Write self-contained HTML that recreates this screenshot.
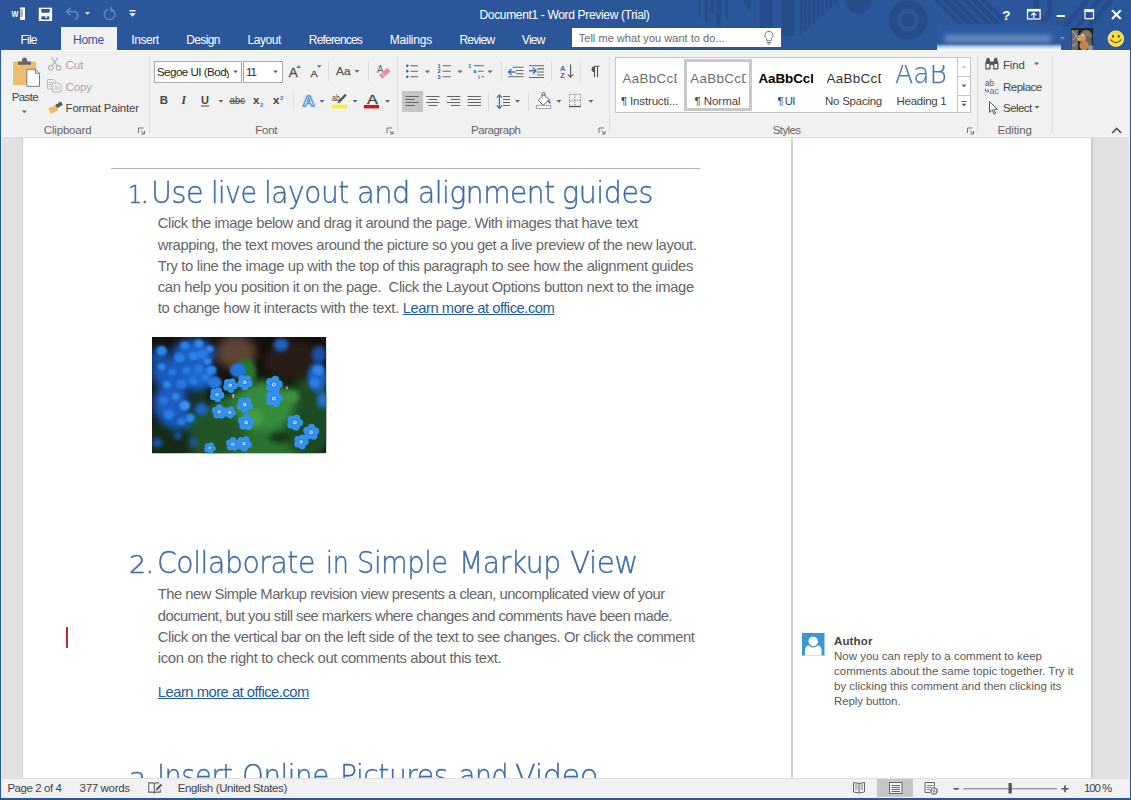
<!DOCTYPE html>
<html lang="en">
<head>
<meta charset="utf-8">
<title>Document1 - Word Preview (Trial)</title>
<style>
html,body{margin:0;padding:0;}
body{width:1131px;height:800px;overflow:hidden;position:relative;background:#ffffff;font-family:"Liberation Sans",sans-serif;}
.a{position:absolute;}
.t{position:absolute;white-space:pre;line-height:1;font-family:"Liberation Sans",sans-serif;}
#titlebar{left:0;top:0;width:1131px;height:50px;background:#2b579a;}
#ribbon{left:0;top:50px;width:1131px;height:88px;background:#f1f1f1;}
#docbg{left:0;top:138px;width:1131px;height:641px;background:#e1e1e1;}
#page{left:23px;top:138px;width:1068px;height:641px;background:#fff;}
#status{left:0;top:779px;width:1131px;height:21px;background:#f1f1f1;z-index:5;}
.sep{position:absolute;width:1px;background:#dcdcdc;}
.z6{z-index:6;}
svg{position:absolute;overflow:visible;}
</style>
</head>
<body>
<div class="a" id="titlebar"></div>
<svg style="left:0;top:0;" width="1131" height="50" viewBox="0 0 1131 50">
<g fill="#254d8b">
<rect x="698" y="0" width="2.600" height="16.800"/><rect x="705" y="0" width="2.700" height="23"/><rect x="711.200" y="0" width="2.700" height="13"/><rect x="716.500" y="0" width="4.500" height="26.500"/><rect x="725.400" y="0" width="2.600" height="19.500"/>
<polygon points="743,0 751.500,0 750,13"/>
<rect x="759.5" y="0" width="13" height="28"/>
<rect x="782" y="0" width="12.5" height="36"/>
<path d="M799.6 0h2.600v35.0h-2.600zM803.9 0h2.600v31.1h-2.600zM808.2 0h2.600v27.2h-2.600zM812.5 0h2.600v23.4h-2.600zM816.8 0h2.600v19.5h-2.600zM821.1 0h2.600v15.6h-2.600zM825.4 0h2.600v11.8h-2.600zM829.7 0h2.600v7.9h-2.600zM834.0 0h2.600v4.0h-2.600z"/>
<path d="M845 0a13.500 13.500 0 0 0 27 0z"/>
<circle cx="908" cy="20" r="6.800"/>
<path d="M908 0.500a19.500 19.500 0 1 0 0.010 0zM908 8.500a11.500 11.500 0 1 1 -0.010 0z" fill-rule="evenodd"/>
<path d="M1034 0h5v12a4 4 0 0 0 8 0v-12h5v13a8.500 8.500 0 0 1 -18 0z"/>
<path d="M1062 27l22 -27h6l-22 27zM1074 27l22 -27h6l-22 27zM1086 27l22 -27h6l-22 27z"/>
</g>
<g stroke="#254d8b" stroke-width="4.200" fill="none" clip-path="url(#tc1)">
<path d="M932 -4l30 30M941.500 -4l30 30M951 -4l30 30M960.500 -4l30 30M970 -4l30 30M979.500 -4l30 30"/>
</g>
<defs><clipPath id="tc1"><polygon points="934,0 986,0 1003,14 1003,24 958,24"/></clipPath></defs>
</svg>
<div class="a" style="left:60.5px;top:27px;width:56.5px;height:23px;background:#f1f1f1;"></div>
<div class="a" style="left:572px;top:28px;width:209px;height:19px;background:#fff;"></div>
<!-- blurred user name -->
<div class="a" style="left:937px;top:26px;width:124px;height:24px;overflow:hidden;">
<div class="a" style="left:0;top:0;width:124px;height:24px;background:#2c5ba1;"></div>
<div class="a" style="left:8px;top:9px;width:106px;height:7px;background:#6a8cc0;filter:blur(2.5px);"></div>
<div class="a" style="left:-6px;top:18.5px;width:136px;height:12px;background:linear-gradient(to bottom,#9db4d6 0,#ffffff 45%);filter:blur(1.2px);"></div>
</div>
<svg style="left:1059.500px;top:36.500px;" width="5" height="3" viewBox="0 0 5 3"><path d="M0 0h5l-2.500 2.800z" fill="#7692c2"/></svg>
<!-- avatar -->
<svg style="left:1071px;top:27.500px;" width="22" height="22.500" viewBox="0 0 22 22.500">
<defs><filter id="av" x="-20%" y="-20%" width="140%" height="140%"><feGaussianBlur stdDeviation="0.700"/></filter><clipPath id="avc"><rect width="22" height="22.500"/></clipPath></defs>
<g clip-path="url(#avc)">
<rect width="22" height="22.500" fill="#1c2434"/>
<g filter="url(#av)">
<rect x="0.500" y="2" width="6.500" height="21" fill="#6f6e68"/>
<path d="M1 3l5 6M2 12l4 -5M1 18l5 -3" stroke="#b8b8b0" stroke-width="0.800"/>
<ellipse cx="15" cy="8" rx="6" ry="6" fill="#8a735e"/>
<ellipse cx="17.500" cy="15" rx="3.500" ry="7" fill="#6d6258"/>
<ellipse cx="10.500" cy="10" rx="4.200" ry="3.500" fill="#d39562"/>
<ellipse cx="13" cy="17.500" rx="4.500" ry="5" fill="#c98048"/>
<ellipse cx="8" cy="11.500" rx="2" ry="1.300" fill="#dca77c"/>
<ellipse cx="19.500" cy="20" rx="2.500" ry="3" fill="#8e969a"/>
</g>
<ellipse cx="12" cy="7" rx="1.100" ry="0.700" fill="#fff"/>
</g>
</svg>
<!-- smiley -->
<svg style="left:1107px;top:30px;" width="18" height="18" viewBox="0 0 18 18">
<circle cx="8.900" cy="8.750" r="8.200" fill="#f6ea8a"/>
<circle cx="8.900" cy="8.750" r="7.200" fill="#f4dc42"/>
<ellipse cx="6" cy="6.300" rx="1" ry="1.500" fill="#5a4508"/><ellipse cx="11.700" cy="6.300" rx="1" ry="1.500" fill="#5a4508"/>
<path d="M3.700 9.800q5.200 5.600 10.400 0" fill="none" stroke="#6a5208" stroke-width="1.200" stroke-linecap="round"/>
</svg>
<div class="a" id="ribbon"></div>
<div class="a" style="left:0;top:136px;width:1131px;height:1px;background:#f5f5f5;"></div>
<div class="a" style="left:0;top:137px;width:1131px;height:1px;background:#d9d9d9;"></div>
<div class="a" id="docbg"></div>
<div class="a" id="page"></div>
<div class="a" style="left:21.500px;top:138px;width:1.500px;height:641px;background:#cdcdcd;"></div>
<div class="a" style="left:1091px;top:138px;width:1.500px;height:641px;background:#cdcdcd;"></div>
<div class="a" style="left:791px;top:138px;width:1.5px;height:641px;background:#d2d2d2;"></div>
<div class="a" style="left:111px;top:168px;width:589px;height:1px;background:#a9b7cb;"></div>
<div class="a" id="status"></div>
<div class="a" style="left:0;top:0;width:1px;height:800px;background:#2b579a;z-index:9;"></div>
<div class="a" style="left:1130px;top:0;width:1px;height:800px;background:#2b579a;z-index:9;"></div>
<div class="a" style="left:0;top:798px;width:1131px;height:2px;background:#2b579a;z-index:9;"></div>
<div class="a" style="left:1px;top:50px;width:1px;height:748px;background:#e6eff9;z-index:8;"></div>
<div class="a" style="left:1129px;top:50px;width:1px;height:748px;background:#e6eff9;z-index:8;"></div>
<div class="a" style="left:1px;top:797px;width:1129px;height:1px;background:#e6eff9;z-index:8;"></div>
<!--QAT-->
<svg style="left:0;top:0;" width="160" height="27" viewBox="0 0 160 27">
<!-- word icon -->
<rect x="20" y="7.500" width="5" height="12.400" fill="#fff"/>
<path d="M20.300 10h2.400M20.300 12h2.400M20.300 14h2.400M20.300 16h2.400" stroke="#2b579a" stroke-width="1"/>
<text x="11.500" y="17.200" font-family="Liberation Sans, sans-serif" font-weight="bold" font-size="8.500" fill="#fff" textLength="6.800" lengthAdjust="spacingAndGlyphs">W</text>
<!-- save -->
<rect x="38.800" y="7.700" width="13.300" height="13.300" fill="#fff"/>
<path d="M41 9h9l-0.600 3.700h-7.800z" fill="#2b579a"/>
<rect x="41.400" y="16.300" width="7.900" height="3.200" fill="#2b579a"/>
<rect x="45.300" y="16.300" width="1.800" height="1.600" fill="#fff"/>
<!-- undo -->
<path d="M70.500 7.800l-3.800 3.700l3.800 3.700M67 11.500h6.500a4 4 0 0 1 2.500 7.300l-1.300 0.900" fill="none" stroke="#6189c8" stroke-width="1.600"/>
<path d="M85 12h5l-2.500 3z" fill="#d7e1f1"/>
<!-- redo -->
<path d="M111.200 9.200a5.300 5.300 0 1 1 -3.200 0" fill="none" stroke="#5f84c0" stroke-width="1.500"/>
<path d="M111 6.500v4.500h4.300" fill="none" stroke="#5f84c0" stroke-width="1.500"/>
<!-- customize -->
<rect x="129.500" y="10" width="6" height="1.400" fill="#fff"/>
<path d="M129.300 13.200h6.400l-3.200 3.600z" fill="#fff"/>
</svg>
<!-- window controls -->
<svg style="left:990px;top:0;" width="141" height="27" viewBox="990 0 141 27">
<text x="1002.300" y="20.200" font-family="Liberation Sans, sans-serif" font-weight="bold" font-size="13.500" fill="#fff">?</text>
<rect x="1027.500" y="9.500" width="12.600" height="9.500" fill="none" stroke="#fff" stroke-width="1.200"/>
<rect x="1027.500" y="9.500" width="12.600" height="2" fill="#fff"/>
<path d="M1033.800 18v-5M1031.300 15.300l2.500 -2.500l2.500 2.500" fill="none" stroke="#fff" stroke-width="1.200"/>
<rect x="1056.700" y="15" width="8.300" height="2" fill="#fff"/>
<rect x="1085" y="10" width="8.500" height="8.700" fill="none" stroke="#fff" stroke-width="1.200"/>
<rect x="1084.400" y="9.300" width="9.700" height="2.800" fill="#fff"/>
<path d="M1112 10.200l8.800 8.800M1120.800 10.200l-8.800 8.800" stroke="#fff" stroke-width="2"/>
</svg>
<!-- lightbulb -->
<svg style="left:762px;top:30px;" width="14" height="16" viewBox="0 0 14 16">
<path d="M7 1.300a4 4 0 0 0 -2.300 7.300v2.200h4.600v-2.200a4 4 0 0 0 -2.300 -7.300z" fill="none" stroke="#7a7a7a" stroke-width="1"/>
<path d="M5 12.500h4M5.500 14h3" stroke="#7a7a7a" stroke-width="1"/>
</svg>
<!--RIBBON-->
<div class="a" style="left:0;top:50px;width:1131px;height:1px;background:#fafbfd;"></div>
<!-- group separators -->
<div class="sep" style="left:149px;top:56px;height:77px;"></div>
<div class="sep" style="left:397px;top:56px;height:77px;"></div>
<div class="sep" style="left:609px;top:56px;height:77px;"></div>
<div class="sep" style="left:977px;top:56px;height:77px;"></div>
<div class="sep" style="left:1052px;top:56px;height:77px;"></div>
<!-- small separators -->
<div class="sep" style="left:328px;top:62px;height:19px;"></div>
<div class="sep" style="left:368px;top:62px;height:19px;"></div>
<div class="sep" style="left:293px;top:92px;height:19px;"></div>
<div class="sep" style="left:501px;top:62px;height:19px;"></div>
<div class="sep" style="left:551px;top:62px;height:19px;"></div>
<div class="sep" style="left:580px;top:62px;height:19px;"></div>
<div class="sep" style="left:488px;top:92px;height:19px;"></div>
<div class="sep" style="left:528px;top:92px;height:19px;"></div>
<!-- font boxes -->
<div class="a" style="left:154px;top:61px;width:88px;height:22px;background:#fff;border:1px solid #ababab;box-sizing:border-box;"></div>
<div class="a" style="left:242.500px;top:61px;width:40.500px;height:22px;background:#fff;border:1px solid #ababab;box-sizing:border-box;"></div>
<!-- align-left selected -->
<div class="a" style="left:402px;top:91px;width:20.500px;height:21px;background:#c6c6c6;"></div>
<!-- styles gallery -->
<div class="a" style="left:615px;top:57px;width:356px;height:56px;background:#fff;border:1px solid #c6c6c6;box-sizing:border-box;"></div>
<div class="a" style="left:684px;top:59px;width:67.500px;height:52px;border:3px solid #c8c8c8;box-sizing:border-box;"></div>
<div class="a" style="left:957px;top:57px;width:14px;height:56px;border-left:1px solid #c6c6c6;box-sizing:border-box;"></div>
<div class="a" style="left:957px;top:75.500px;width:14px;height:1px;background:#c6c6c6;"></div>
<div class="a" style="left:957px;top:94.500px;width:14px;height:1px;background:#c6c6c6;"></div>
<div class="a" style="left:892px;top:65px;width:62px;height:24px;overflow:hidden;"><span class="t" style="left:2.500px;top:-5.300px;font-size:28.300px;color:#4a78b0;font-family:'DejaVu Sans',sans-serif;font-weight:200;-webkit-text-stroke:0.250px #4a78b0;transform:scaleX(0.940);transform-origin:0 0;">AaB</span></div>
<svg style="left:0;top:50px;" width="1131" height="88" viewBox="0 50 1131 88" font-family="Liberation Sans, sans-serif">
<!-- paste -->
<rect x="13" y="61.500" width="23" height="23.500" rx="1" fill="#eabf6f"/>
<path d="M18 64.800v-3.200h4v-1.600a2.500 2.500 0 0 1 5 0v1.600h4v3.200z" fill="#666"/>
<path d="M26.800 69.300h8.700l4 4v13h-12.700z" fill="#fff" stroke="#7a7a7a" stroke-width="1"/>
<path d="M35.500 69.300v4h4" fill="none" stroke="#7a7a7a" stroke-width="1"/>
<path d="M21.800 110.500h5l-2.500 2.800z" fill="#666"/>
<!-- cut (disabled) -->
<g fill="none" stroke="#b9b9b9" stroke-width="1.300">
<circle cx="50.800" cy="67.800" r="2.300"/><circle cx="58.500" cy="67.800" r="2.300"/>
<path d="M52 65.800l6 -8.300M57.300 65.800l-6 -8.300"/>
</g>
<!-- copy (disabled) -->
<g fill="#f1f1f1" stroke="#b9b9b9" stroke-width="1">
<path d="M47.500 79.500h6l2 2v7.500h-8z"/>
<path d="M52.500 83h6l2.500 2.500v6.500h-8.500z"/>
</g>
<path d="M49 82.500h3M49 84.500h2.500M49 86.500h2.500M54.500 87h4.500M54.500 89h4.500" stroke="#b9b9b9" stroke-width="0.900"/>
<!-- format painter -->
<path d="M48.300 108.500l7 -3.500l3 5.500l-7.500 3.500z" fill="#e9bf6c"/>
<path d="M55.300 105l5.500 -3.600l2 3.400l-5.500 3.500z" fill="#555"/>
<path d="M57 102.500l0.800 1.400" stroke="#f1f1f1" stroke-width="0.800"/>
<!-- launchers -->
<g fill="none" stroke="#777" stroke-width="1">
<path id="ln" d="M138.500 133v-5h5M141 130.500l3.500 3.500M144.500 131v3h-3"/>
<use href="#ln" x="248.500"/><use href="#ln" x="460.500"/><use href="#ln" x="829"/>
</g>
<!-- dropdown arrows -->
<g fill="#666">
<path id="dd" d="M0 0h5l-2.500 2.800z" transform="translate(233,70.500)"/>
<use href="#dd" x="40"/>
<use href="#dd" x="121.500" y="-0.500"/>
<use href="#dd" x="-14.500" y="29.500"/>
<use href="#dd" x="86.500" y="29.500"/>
<use href="#dd" x="119.500" y="29.500"/>
<use href="#dd" x="152" y="29.500"/>
<use href="#dd" x="192" y="0"/>
<use href="#dd" x="224.500" y="0"/>
<use href="#dd" x="254.500" y="0"/>
<use href="#dd" x="282" y="29.500"/>
<use href="#dd" x="323.500" y="29.500"/>
<use href="#dd" x="355.500" y="29.500"/>
<use href="#dd" x="801" y="-8"/>
<use href="#dd" x="801.500" y="35.500"/>
</g>
<!-- font row 1 -->
<text x="288.800" y="76.800" font-size="12" fill="#555" stroke="#555" stroke-width="0.350" textLength="9" lengthAdjust="spacingAndGlyphs">A</text>
<path d="M296.300 68h4.800l-2.400 -2.800z" fill="#3b78c3"/>
<text x="310.500" y="76.800" font-size="9.300" fill="#555" stroke="#555" stroke-width="0.300" textLength="7.200" lengthAdjust="spacingAndGlyphs">A</text>
<path d="M316.800 65.200h4.800l-2.400 2.800z" fill="#3b78c3"/>
<text x="336" y="75.200" font-size="11.500" fill="#555" stroke="#555" stroke-width="0.250" textLength="14.500" lengthAdjust="spacingAndGlyphs">Aa</text>
<text x="377" y="72.500" font-size="10" fill="#666" textLength="6.500" lengthAdjust="spacingAndGlyphs">A</text>
<path d="M379 75l8.300 -7.200l3.200 3.700l-8.300 7.200z" fill="#e58ea0"/>
<path d="M381.500 72.800l3.200 3.700" stroke="#f1f1f1" stroke-width="0.900"/>
<!-- font row 2 -->
<text x="159.700" y="104.400" font-size="11.500" font-weight="bold" fill="#444">B</text>
<text x="181.500" y="104.400" font-size="11.500" font-weight="bold" font-style="italic" font-family="Liberation Serif, serif" fill="#444">I</text>
<text x="201" y="104" font-size="11" font-weight="bold" fill="#444">U</text>
<rect x="201" y="105.500" width="8" height="1" fill="#444"/>
<text x="229.800" y="104.400" font-size="10" fill="#444" textLength="15" lengthAdjust="spacingAndGlyphs">abc</text>
<rect x="229" y="100.700" width="16.500" height="1" fill="#444"/>
<text x="253" y="104.400" font-size="11.500" font-weight="bold" fill="#444">x</text>
<text x="260" y="107" font-size="6" font-weight="bold" fill="#3b78c3">2</text>
<text x="273" y="104.400" font-size="11.500" font-weight="bold" fill="#444">x</text>
<text x="280" y="99.500" font-size="6" font-weight="bold" fill="#3b78c3">2</text>
<text x="302.800" y="105.800" font-size="15.500" font-weight="bold" fill="#cfe3f7" stroke="#b5d4f1" stroke-width="2.600" textLength="11.600" lengthAdjust="spacingAndGlyphs">A</text>
<text x="302.800" y="105.800" font-size="15.500" font-weight="bold" fill="#fff" stroke="#3b82cf" stroke-width="0.900" textLength="11.600" lengthAdjust="spacingAndGlyphs">A</text>
<text x="332" y="100.500" font-size="8.500" fill="#444" textLength="8" lengthAdjust="spacingAndGlyphs">ab</text>
<path d="M337.500 103.300l1 -2.800l6.500 -6.700l1.700 1.700l-6.500 6.700z" fill="#555"/>
<rect x="332" y="104.800" width="15.300" height="3.600" fill="#f5ee31"/>
<text x="367" y="104" font-size="12.500" fill="#444" stroke="#444" stroke-width="0.300" textLength="10.800" lengthAdjust="spacingAndGlyphs">A</text>
<rect x="364" y="105" width="15" height="3.400" fill="#d5141c"/>
<!-- paragraph row 1 -->
<g fill="#2d5f9e"><circle cx="407.300" cy="65.700" r="1.200"/><circle cx="407.300" cy="71.200" r="1.200"/><circle cx="407.300" cy="76.800" r="1.200"/></g>
<path d="M410.500 65.700h7.500M410.500 71.200h7.500M410.500 76.800h7.500" stroke="#666" stroke-width="1.100"/>
<g font-size="5.500" font-weight="bold" fill="#2d5f9e"><text x="437.500" y="67.700">1</text><text x="437.500" y="73.200">2</text><text x="437.500" y="78.800">3</text></g>
<path d="M442.700 65.700h8M442.700 71.200h8M442.700 76.800h8" stroke="#666" stroke-width="1.100"/>
<g font-size="5.500" font-weight="bold" fill="#2d5f9e"><text x="468.300" y="67.700">1</text><text x="473.300" y="73.200">a</text><text x="478" y="78.800">i</text></g>
<path d="M474 65.700h9.800M478 71.200h5.800M481.500 76.800h2.500" stroke="#666" stroke-width="1.100"/>
<!-- decrease indent -->
<path d="M512.600 67.300h11M516 70.500h7.600M516 73.700h7.600M508.200 76.800h15.400" stroke="#666" stroke-width="1.100"/>
<path d="M508.500 72h7M511.500 69l-3 3l3 3" fill="none" stroke="#3a73b3" stroke-width="1.400"/>
<!-- increase indent -->
<path d="M529 65.700h15M537 68.900h7M537 72h7M537 75h7M529 77.500h15" stroke="#666" stroke-width="1.100"/>
<path d="M529 70.800h7M533 67.800l3 3l-3 3" fill="none" stroke="#3a73b3" stroke-width="1.400"/>
<!-- sort -->
<text x="560" y="70.800" font-size="7.500" font-weight="bold" fill="#3a73b3">A</text>
<text x="560.200" y="78.200" font-size="7.500" font-weight="bold" fill="#8d4b9f">Z</text>
<path d="M570.600 64.600v12.500M567.800 74.300l2.800 3l2.800 -3" fill="none" stroke="#555" stroke-width="1.100"/>
<!-- pilcrow -->
<path d="M594.500 66.300h5M594.500 66.300v11M597.500 66.300v11" stroke="#555" stroke-width="1.100" fill="none"/>
<path d="M594.500 66.300a2.900 2.900 0 0 0 0 5.800z" fill="#555"/>
<!-- paragraph row 2 : alignment -->
<path d="M405.500 96.500h13.300M405.500 99.500h9.200M405.500 102.500h13.300M405.500 105.500h9.200" stroke="#666" stroke-width="1.100"/>
<path d="M426.200 96.500h13.300M428.500 99.500h8.800M426.200 102.500h13.300M428.500 105.500h8.800" stroke="#666" stroke-width="1.100"/>
<path d="M447 96.500h13.300M451 99.500h9.300M447 102.500h13.300M451 105.500h9.300" stroke="#666" stroke-width="1.100"/>
<path d="M467.600 96.500h13.500M467.600 99.500h13.500M467.600 102.500h13.500M467.600 105.500h13.500" stroke="#666" stroke-width="1.100"/>
<!-- line spacing -->
<path d="M499.400 95v13M496.800 97.700l2.600 -2.800l2.600 2.800M496.800 105.500l2.600 2.800l2.600 -2.800" fill="none" stroke="#3a73b3" stroke-width="1.200"/>
<path d="M503 96.500h7M503 99.500h7M503 102.500h7M503 105.500h7" stroke="#666" stroke-width="1.100"/>
<!-- shading -->
<path d="M538.300 100.300l5.700 -5.700l5 5l-5.700 5.700z" fill="#fff" stroke="#666" stroke-width="1"/>
<path d="M542 96.500v-2.500a1.500 1.500 0 0 1 3 0v2" fill="none" stroke="#666" stroke-width="1"/>
<path d="M548.500 99.500q2.300 1.300 2 4.500q-2.200 -0.800 -2.800 -3.500z" fill="#3a73b3"/>
<rect x="536.300" y="105.300" width="14.400" height="3" fill="#fff" stroke="#8a8a8a" stroke-width="0.800"/>
<!-- borders -->
<path d="M569.500 94.300h11M569.500 100.300h11M569.500 94.300v12M575 94.300v12M580.500 94.300v12" fill="none" stroke="#888" stroke-width="1" stroke-dasharray="1.200 1.200"/>
<path d="M569 106.500h12" stroke="#555" stroke-width="1.300"/>
<!-- gallery scroll -->
<path d="M961.500 68l2.500 -2.800l2.500 2.800z" fill="#c4c4c4"/>
<path d="M961.500 84.500h5l-2.500 2.800z" fill="#666"/>
<path d="M961.300 101.500h5.400" stroke="#666" stroke-width="1"/>
<path d="M961.500 103.800h5l-2.500 2.800z" fill="#666"/>
<!-- find (binoculars) -->
<g fill="#555">
<path d="M985.300 69.500v-6.500l1.500 -5h2.500l1.200 5v6.500zM993.200 69.500v-6.500l1.200 -5h2.500l1.500 5v6.500z"/>
<rect x="990" y="61.500" width="4" height="3.500"/>
</g>
<path d="M986.500 68.300v-4.300h2.800v4.300zM994.400 68.300v-4.300h2.800v4.300z" fill="#f1f1f1"/>
<!-- replace -->
<text x="985" y="86" font-size="9" fill="#555" textLength="9" lengthAdjust="spacingAndGlyphs">ab</text>
<text x="989.500" y="94" font-size="9" fill="#3a73b3" textLength="9.500" lengthAdjust="spacingAndGlyphs">ac</text>
<path d="M985.500 88.500v2.500h3M987.200 89.300l1.500 1.700l-1.500 1.700" fill="none" stroke="#8d4b9f" stroke-width="0.900"/>
<!-- select cursor -->
<path d="M989.500 101.500v11l2.600 -2.600l1.900 4.200l1.600 -0.700l-1.900 -4.100h3.600z" fill="#fff" stroke="#555" stroke-width="1"/>
<!-- collapse ribbon -->
<path d="M1112.200 133l4.500 -4.500l4.500 4.500" fill="none" stroke="#555" stroke-width="1.700"/>
</svg>

<!--DOC-->
<svg style="left:151.500px;top:337px;" width="174.300" height="116.300" viewBox="0 0 174.300 116.300">
<defs><filter id="b1" x="-40%" y="-40%" width="180%" height="180%"><feGaussianBlur stdDeviation="4.200"/></filter><filter id="b2" x="-30%" y="-30%" width="160%" height="160%"><feGaussianBlur stdDeviation="2"/></filter><filter id="b3" x="-30%" y="-30%" width="160%" height="160%"><feGaussianBlur stdDeviation="0.450"/></filter><filter id="b4" x="-30%" y="-30%" width="160%" height="160%"><feGaussianBlur stdDeviation="1.100"/></filter><clipPath id="ic"><rect width="174.300" height="116.300"/></clipPath></defs>
<g clip-path="url(#ic)">
<rect width="174.300" height="116.300" fill="#14110c"/>
<ellipse cx="84.0" cy="15.6" rx="20.3" ry="16.8" fill="#5f4536" filter="url(#b1)"/>
<ellipse cx="140.6" cy="24.4" rx="28.3" ry="19.5" fill="#271a13" filter="url(#b1)"/>
<ellipse cx="105.2" cy="93.4" rx="60.1" ry="40.7" fill="#2a7030" filter="url(#b1)"/>
<ellipse cx="59.2" cy="95.1" rx="35.4" ry="26.5" fill="#205527" filter="url(#b1)"/>
<ellipse cx="156.5" cy="81.0" rx="26.5" ry="40.7" fill="#1c4c24" filter="url(#b1)"/>
<ellipse cx="112.3" cy="68.6" rx="30.1" ry="24.8" fill="#368c3c" filter="url(#b1)"/>
<ellipse cx="94.6" cy="36.8" rx="9.7" ry="15.9" fill="#2c7533" filter="url(#b2)"/>
<ellipse cx="15.0" cy="102.2" rx="24.8" ry="19.5" fill="#122c17" filter="url(#b1)"/>
<ellipse cx="128.2" cy="100.4" rx="10.6" ry="5.3" fill="#143819" filter="url(#b2)"/>
<ellipse cx="46.9" cy="63.3" rx="9.7" ry="14.1" fill="#14311a" filter="url(#b2)"/>
<ellipse cx="101.7" cy="81.0" rx="10.6" ry="8.8" fill="#449a45" filter="url(#b2)"/>
<ellipse cx="138.8" cy="59.8" rx="8.8" ry="7.1" fill="#3d9040" filter="url(#b2)"/>
<ellipse cx="41.6" cy="17.3" rx="21.2" ry="15.0" fill="#1b62c9" filter="url(#b1)"/>
<ellipse cx="25.6" cy="36.8" rx="26.5" ry="17.7" fill="#1a5cc0" filter="url(#b1)"/>
<ellipse cx="48.6" cy="40.3" rx="14.1" ry="12.4" fill="#1f69d0" filter="url(#b1)"/>
<ellipse cx="18.6" cy="66.8" rx="17.7" ry="21.2" fill="#1a5fc4" filter="url(#b1)"/>
<ellipse cx="27.4" cy="82.8" rx="14.1" ry="9.7" fill="#195abc" filter="url(#b1)"/>
<ellipse cx="7.1" cy="22.6" rx="9.7" ry="12.4" fill="#174fa8" filter="url(#b1)"/>
<ellipse cx="32.7" cy="8.5" rx="4.6" ry="4.1" fill="#2a7de2" filter="url(#b4)"/>
<ellipse cx="46.9" cy="6.7" rx="4.6" ry="4.1" fill="#2f86ea" filter="url(#b4)"/>
<ellipse cx="57.5" cy="12.0" rx="3.9" ry="3.5" fill="#2f86ea" filter="url(#b4)"/>
<ellipse cx="41.6" cy="19.1" rx="4.6" ry="4.1" fill="#2f86ea" filter="url(#b4)"/>
<ellipse cx="27.4" cy="20.9" rx="5.3" ry="4.8" fill="#2a7de2" filter="url(#b4)"/>
<ellipse cx="55.7" cy="24.4" rx="3.9" ry="3.5" fill="#2f86ea" filter="url(#b4)"/>
<ellipse cx="46.9" cy="31.5" rx="4.6" ry="4.1" fill="#2678dc" filter="url(#b4)"/>
<ellipse cx="34.5" cy="33.2" rx="3.9" ry="3.5" fill="#2a7de2" filter="url(#b4)"/>
<ellipse cx="20.3" cy="35.0" rx="3.9" ry="3.5" fill="#2678dc" filter="url(#b4)"/>
<ellipse cx="9.7" cy="29.7" rx="3.9" ry="3.5" fill="#2f86ea" filter="url(#b4)"/>
<ellipse cx="15.0" cy="47.4" rx="3.9" ry="3.5" fill="#2f86ea" filter="url(#b4)"/>
<ellipse cx="29.2" cy="47.4" rx="5.3" ry="4.8" fill="#2678dc" filter="url(#b4)"/>
<ellipse cx="41.6" cy="43.9" rx="3.9" ry="3.5" fill="#2a7de2" filter="url(#b4)"/>
<ellipse cx="53.9" cy="40.3" rx="3.9" ry="3.5" fill="#2a7de2" filter="url(#b4)"/>
<ellipse cx="11.5" cy="63.3" rx="4.6" ry="4.1" fill="#2678dc" filter="url(#b4)"/>
<ellipse cx="23.9" cy="59.8" rx="3.9" ry="3.5" fill="#2f86ea" filter="url(#b4)"/>
<ellipse cx="32.7" cy="68.6" rx="5.3" ry="4.8" fill="#3790ef" filter="url(#b4)"/>
<ellipse cx="16.8" cy="77.5" rx="5.3" ry="4.8" fill="#2a7de2" filter="url(#b4)"/>
<ellipse cx="29.2" cy="84.5" rx="3.9" ry="3.5" fill="#2a7de2" filter="url(#b4)"/>
<ellipse cx="38.0" cy="81.0" rx="4.6" ry="4.1" fill="#2f86ea" filter="url(#b4)"/>
<ellipse cx="9.7" cy="13.8" rx="5.3" ry="4.8" fill="#2f86ea" filter="url(#b4)"/>
<ellipse cx="59.2" cy="33.2" rx="5.3" ry="4.8" fill="#2f86ea" filter="url(#b4)"/>
<ellipse cx="50.4" cy="17.3" rx="5.3" ry="4.8" fill="#2a7de2" filter="url(#b4)"/>
<ellipse cx="5.3" cy="105.7" rx="5.0" ry="5.0" fill="#1a55b2" filter="url(#b2)"/>
<ellipse cx="25.6" cy="98.7" rx="3.5" ry="3.5" fill="#1b58b4" filter="url(#b2)"/>
<ellipse cx="41.6" cy="104.9" rx="4.2" ry="5.0" fill="#1a52ac" filter="url(#b2)"/>
<ellipse cx="49.5" cy="72.1" rx="6.7" ry="6.7" fill="#1d63c6" filter="url(#b2)"/>
<ellipse cx="165.3" cy="40.3" rx="9.7" ry="15.0" fill="#1f63c6" filter="url(#b2)"/>
<ellipse cx="166.2" cy="33.2" rx="5.3" ry="5.3" fill="#2f82e6" filter="url(#b4)"/>
<ellipse cx="162.7" cy="45.6" rx="5.0" ry="5.0" fill="#2b7ce0" filter="url(#b4)"/>
<ellipse cx="167.1" cy="17.3" rx="7.1" ry="8.8" fill="#1b4fa6" filter="url(#b2)"/>
<ellipse cx="170.6" cy="63.3" rx="5.3" ry="8.0" fill="#2371d6" filter="url(#b2)"/>
<ellipse cx="129.1" cy="7.6" rx="7.4" ry="6.4" fill="#1f66cc" filter="url(#b2)"/>
<ellipse cx="85.8" cy="33.2" rx="8.0" ry="7.1" fill="#2374dd" filter="url(#b4)"/>
<ellipse cx="62.8" cy="45.6" rx="7.1" ry="6.2" fill="#2577de" filter="url(#b4)"/>
<g filter="url(#b3)">
<g fill="#3391ec"><circle cx="95.4" cy="41.7" r="3.5"/><circle cx="97.0" cy="46.6" r="3.5"/><circle cx="92.9" cy="49.7" r="3.5"/><circle cx="88.7" cy="46.7" r="3.5"/><circle cx="90.2" cy="41.8" r="3.5"/><circle cx="92.8" cy="45.3" r="3.0" fill="#2a80e0"/><circle cx="92.8" cy="45.3" r="1.8" fill="#d6eaff"/><circle cx="92.8" cy="45.3" r="0.8" fill="#2a6fd0"/></g>
<g fill="#3391ec"><circle cx="123.3" cy="42.7" r="3.9"/><circle cx="126.8" cy="47.1" r="3.9"/><circle cx="123.7" cy="51.9" r="3.9"/><circle cx="118.3" cy="50.4" r="3.9"/><circle cx="118.0" cy="44.8" r="3.9"/><circle cx="122.0" cy="47.4" r="3.3" fill="#2a80e0"/><circle cx="122.0" cy="47.4" r="2.0" fill="#d6eaff"/><circle cx="122.0" cy="47.4" r="0.9" fill="#2a6fd0"/></g>
<g fill="#3391ec"><circle cx="80.2" cy="44.6" r="3.4"/><circle cx="82.5" cy="48.9" r="3.4"/><circle cx="79.0" cy="52.4" r="3.4"/><circle cx="74.6" cy="50.2" r="3.4"/><circle cx="75.4" cy="45.3" r="3.4"/><circle cx="78.3" cy="48.3" r="2.8" fill="#2a80e0"/><circle cx="78.3" cy="48.3" r="1.7" fill="#d6eaff"/><circle cx="78.3" cy="48.3" r="0.7" fill="#2a6fd0"/></g>
<g fill="#3391ec"><circle cx="123.3" cy="56.9" r="3.9"/><circle cx="126.8" cy="61.3" r="3.9"/><circle cx="123.7" cy="66.0" r="3.9"/><circle cx="118.3" cy="64.6" r="3.9"/><circle cx="118.0" cy="58.9" r="3.9"/><circle cx="122.0" cy="61.5" r="3.3" fill="#2a80e0"/><circle cx="122.0" cy="61.5" r="2.0" fill="#d6eaff"/><circle cx="122.0" cy="61.5" r="0.9" fill="#2a6fd0"/></g>
<g fill="#3391ec"><circle cx="95.5" cy="64.0" r="3.7"/><circle cx="97.2" cy="69.1" r="3.7"/><circle cx="92.9" cy="72.3" r="3.7"/><circle cx="88.5" cy="69.2" r="3.7"/><circle cx="90.1" cy="64.1" r="3.7"/><circle cx="92.8" cy="67.7" r="3.1" fill="#2a80e0"/><circle cx="92.8" cy="67.7" r="1.9" fill="#d6eaff"/><circle cx="92.8" cy="67.7" r="0.8" fill="#2a6fd0"/></g>
<g fill="#3391ec"><circle cx="66.7" cy="53.9" r="3.4"/><circle cx="69.0" cy="58.2" r="3.4"/><circle cx="65.7" cy="61.7" r="3.4"/><circle cx="61.3" cy="59.7" r="3.4"/><circle cx="61.9" cy="54.8" r="3.4"/><circle cx="64.9" cy="57.6" r="2.8" fill="#2a80e0"/><circle cx="64.9" cy="57.6" r="1.7" fill="#d6eaff"/><circle cx="64.9" cy="57.6" r="0.7" fill="#2a6fd0"/></g>
<g fill="#3391ec"><circle cx="67.3" cy="70.6" r="3.4"/><circle cx="71.2" cy="73.6" r="3.4"/><circle cx="69.6" cy="78.2" r="3.4"/><circle cx="64.7" cy="78.1" r="3.4"/><circle cx="63.3" cy="73.4" r="3.4"/><circle cx="67.2" cy="74.8" r="2.8" fill="#2a80e0"/><circle cx="67.2" cy="74.8" r="1.7" fill="#d6eaff"/><circle cx="67.2" cy="74.8" r="0.7" fill="#2a6fd0"/></g>
<g fill="#3391ec"><circle cx="79.2" cy="72.1" r="2.8"/><circle cx="81.3" cy="75.7" r="2.8"/><circle cx="78.5" cy="78.8" r="2.8"/><circle cx="74.8" cy="77.1" r="2.8"/><circle cx="75.2" cy="73.0" r="2.8"/><circle cx="77.8" cy="75.3" r="2.4" fill="#2a80e0"/><circle cx="77.8" cy="75.3" r="1.5" fill="#d6eaff"/><circle cx="77.8" cy="75.3" r="0.6" fill="#2a6fd0"/></g>
<g fill="#3391ec"><circle cx="94.5" cy="80.8" r="3.7"/><circle cx="98.6" cy="84.4" r="3.7"/><circle cx="96.4" cy="89.4" r="3.7"/><circle cx="91.1" cy="88.9" r="3.7"/><circle cx="89.8" cy="83.6" r="3.7"/><circle cx="94.1" cy="85.4" r="3.1" fill="#2a80e0"/><circle cx="94.1" cy="85.4" r="1.9" fill="#d6eaff"/><circle cx="94.1" cy="85.4" r="0.8" fill="#2a6fd0"/></g>
<g fill="#3391ec"><circle cx="144.6" cy="81.1" r="3.7"/><circle cx="147.5" cy="85.7" r="3.7"/><circle cx="144.0" cy="89.9" r="3.7"/><circle cx="139.0" cy="87.9" r="3.7"/><circle cx="139.4" cy="82.5" r="3.7"/><circle cx="142.9" cy="85.4" r="3.1" fill="#2a80e0"/><circle cx="142.9" cy="85.4" r="1.9" fill="#d6eaff"/><circle cx="142.9" cy="85.4" r="0.8" fill="#2a6fd0"/></g>
<g fill="#3391ec"><circle cx="159.4" cy="90.5" r="3.7"/><circle cx="163.6" cy="93.9" r="3.7"/><circle cx="161.7" cy="99.0" r="3.7"/><circle cx="156.3" cy="98.7" r="3.7"/><circle cx="154.9" cy="93.5" r="3.7"/><circle cx="159.2" cy="95.1" r="3.1" fill="#2a80e0"/><circle cx="159.2" cy="95.1" r="1.9" fill="#d6eaff"/><circle cx="159.2" cy="95.1" r="0.8" fill="#2a6fd0"/></g>
<g fill="#3391ec"><circle cx="150.5" cy="100.9" r="3.4"/><circle cx="153.2" cy="105.0" r="3.4"/><circle cx="150.2" cy="108.9" r="3.4"/><circle cx="145.6" cy="107.2" r="3.4"/><circle cx="145.8" cy="102.3" r="3.4"/><circle cx="149.1" cy="104.9" r="2.8" fill="#2a80e0"/><circle cx="149.1" cy="104.9" r="1.7" fill="#d6eaff"/><circle cx="149.1" cy="104.9" r="0.7" fill="#2a6fd0"/></g>
<g fill="#3391ec"><circle cx="94.1" cy="102.8" r="3.5"/><circle cx="96.2" cy="107.5" r="3.5"/><circle cx="92.4" cy="111.0" r="3.5"/><circle cx="87.9" cy="108.4" r="3.5"/><circle cx="89.0" cy="103.4" r="3.5"/><circle cx="92.0" cy="106.6" r="3.0" fill="#2a80e0"/><circle cx="92.0" cy="106.6" r="1.8" fill="#d6eaff"/><circle cx="92.0" cy="106.6" r="0.8" fill="#2a6fd0"/></g>
<g fill="#3391ec"><circle cx="81.1" cy="103.2" r="3.2"/><circle cx="84.6" cy="106.2" r="3.2"/><circle cx="82.9" cy="110.5" r="3.2"/><circle cx="78.3" cy="110.2" r="3.2"/><circle cx="77.2" cy="105.7" r="3.2"/><circle cx="80.8" cy="107.2" r="2.7" fill="#2a80e0"/><circle cx="80.8" cy="107.2" r="1.7" fill="#d6eaff"/><circle cx="80.8" cy="107.2" r="0.7" fill="#2a6fd0"/></g>
<g fill="#3391ec"><circle cx="59.1" cy="108.0" r="2.7"/><circle cx="61.1" cy="111.3" r="2.7"/><circle cx="58.6" cy="114.2" r="2.7"/><circle cx="55.0" cy="112.8" r="2.7"/><circle cx="55.3" cy="108.9" r="2.7"/><circle cx="57.8" cy="111.1" r="2.2" fill="#2a80e0"/><circle cx="57.8" cy="111.1" r="1.4" fill="#d6eaff"/><circle cx="57.8" cy="111.1" r="0.6" fill="#2a6fd0"/></g>
</g>
<ellipse cx="81.3" cy="58.9" rx="1" ry="2.200" fill="#e6a3d8"/>
<ellipse cx="134.9" cy="50.9" rx="1" ry="1.600" fill="#c78fd0"/>
</g></svg>
<!-- change bar -->
<div class="a" style="left:66px;top:627px;width:2px;height:21px;background:#c8242b;"></div>
<!-- comment avatar -->
<svg style="left:802px;top:633px;" width="23" height="23" viewBox="0 0 23 23">
<rect width="22.500" height="22.500" fill="#3b96d3"/>
<circle cx="11.200" cy="8.300" r="4.800" fill="#fff"/>
<path d="M3 22.500v-5.500a5 5 0 0 1 5 -5h6.500a5 5 0 0 1 5 5v5.500z" fill="#fff"/>
<circle cx="11.200" cy="8.300" r="5.600" fill="none" stroke="#3b96d3" stroke-width="1.200"/>
<circle cx="11.200" cy="8.300" r="4.400" fill="#fff"/>
</svg>

<!--STATUS-->
<div class="a z6" style="left:0;top:778px;width:1131px;height:1px;background:#dedede;"></div>
<div class="a z6" style="left:877px;top:779px;width:36px;height:19px;background:#c6c6c6;"></div>
<svg class="z6" style="left:0;top:779px;" width="1131" height="21" viewBox="0 779 1131 21">
<!-- proofing -->
<path d="M154.300 784q-0.300 -1.100 -1.800 -1.100h-3.800v9.200h3.800q1.500 0 1.800 1.300M154.300 784v9.400M154.300 784q0.300 -1.100 1.800 -1.100h3M154.300 793.400q0.300 -1.300 1.800 -1.300h4.200v-2.600" fill="none" stroke="#666" stroke-width="1.100"/>
<path d="M156.300 789.900l5.200 -5.400" stroke="#f1f1f1" stroke-width="3.400"/>
<path d="M156.600 789.600l4.900 -5.100" stroke="#555" stroke-width="1.900"/>
<path d="M155.700 790.800l0.500 -1.600l1.100 1.100z" fill="#555"/>
<!-- read mode -->
<path d="M859 783.500v9.500M859 783.500l-5.500 -1v9.500l5.500 1M859 783.500l5.500 -1v9.500l-5.500 1" fill="none" stroke="#666" stroke-width="1"/>
<path d="M855 785h2.500M855 787h2.500M855 789h2.500M860.500 785h2.500M860.500 787h2.500M860.500 789h2.500" stroke="#777" stroke-width="0.900"/>
<!-- print layout -->
<rect x="889.500" y="782.500" width="12.500" height="11" fill="#f6f6f6" stroke="#666" stroke-width="1"/>
<path d="M891.500 785.500h8.500M891.500 787.500h8.500M891.500 789.500h8.500M891.500 791.500h8.500" stroke="#666" stroke-width="1"/>
<!-- web layout -->
<path d="M934.500 786.500v-4h-9.500v10h5" fill="none" stroke="#666" stroke-width="1"/>
<path d="M927 785.500h5.500M927 787.500h4M927 789.500h3" stroke="#777" stroke-width="0.900"/>
<circle cx="934" cy="791" r="3.300" fill="#f1f1f1" stroke="#555" stroke-width="1"/>
<path d="M931 791h6M934 788v6" stroke="#777" stroke-width="0.700"/>
<!-- zoom -->
<rect x="953.800" y="788" width="5" height="1.600" fill="#555"/>
<rect x="963" y="788.300" width="94" height="1" fill="#777"/>
<rect x="1008.500" y="783" width="3.300" height="10.500" fill="#555"/>
<path d="M1061.500 788.800h7M1065 785.300v7" stroke="#555" stroke-width="1.600"/>
</svg>

<span class="t" style="left:479.5px;top:9.01px;font-size:12px;color:#ffffff;letter-spacing:-0.335px;">Document1 - Word Preview (Trial)</span>
<span class="t" style="left:20.4px;top:34.01px;font-size:12px;color:#ffffff;letter-spacing:-0.736px;">File</span>
<span class="t" style="left:73.0px;top:34.01px;font-size:12px;color:#2b579a;letter-spacing:-0.254px;">Home</span>
<span class="t" style="left:131.3px;top:34.01px;font-size:12px;color:#ffffff;letter-spacing:-0.453px;">Insert</span>
<span class="t" style="left:186.2px;top:34.01px;font-size:12px;color:#ffffff;letter-spacing:-0.627px;">Design</span>
<span class="t" style="left:247.5px;top:34.01px;font-size:12px;color:#ffffff;letter-spacing:-0.455px;">Layout</span>
<span class="t" style="left:308.8px;top:34.01px;font-size:12px;color:#ffffff;letter-spacing:-0.817px;">References</span>
<span class="t" style="left:389.7px;top:34.01px;font-size:12px;color:#ffffff;letter-spacing:-0.214px;">Mailings</span>
<span class="t" style="left:459.4px;top:34.01px;font-size:12px;color:#ffffff;letter-spacing:-0.727px;">Review</span>
<span class="t" style="left:521.8px;top:34.01px;font-size:12px;color:#ffffff;letter-spacing:-0.699px;">View</span>
<span class="t" style="left:578.7px;top:33.01px;font-size:11px;color:#6a6a6a;letter-spacing:0.036px;">Tell me what you want to do...</span>
<span class="t" style="left:11.7px;top:92.00px;font-size:11.5px;color:#444444;letter-spacing:-0.624px;">Paste</span>
<span class="t" style="left:65.6px;top:60.00px;font-size:11.5px;color:#a6a6a6;letter-spacing:-0.135px;">Cut</span>
<span class="t" style="left:65.6px;top:82.00px;font-size:11.5px;color:#a6a6a6;letter-spacing:-0.165px;">Copy</span>
<span class="t" style="left:65.6px;top:103.00px;font-size:11.5px;color:#444444;letter-spacing:-0.204px;">Format Painter</span>
<span class="t" style="left:43.8px;top:125.00px;font-size:11.5px;color:#666666;letter-spacing:-0.182px;">Clipboard</span>
<span class="t" style="left:255.3px;top:125.00px;font-size:11.5px;color:#666666;letter-spacing:-0.254px;">Font</span>
<span class="t" style="left:471.0px;top:125.00px;font-size:11.5px;color:#666666;letter-spacing:-0.469px;">Paragraph</span>
<span class="t" style="left:772.8px;top:125.00px;font-size:11.5px;color:#666666;letter-spacing:-0.638px;">Styles</span>
<span class="t" style="left:997.4px;top:125.00px;font-size:11.5px;color:#666666;letter-spacing:-0.125px;">Editing</span>
<span class="t" style="left:156.9px;top:66.00px;font-size:11.6px;color:#262626;letter-spacing:-0.526px;width:72.6px;overflow:hidden;">Segoe UI (Body</span>
<span class="t" style="left:245.9px;top:66.00px;font-size:11.6px;color:#262626;letter-spacing:-1.023px;">11</span>
<span class="t" style="left:1003.0px;top:60.00px;font-size:11.5px;color:#444444;letter-spacing:-0.169px;">Find</span>
<span class="t" style="left:1003.0px;top:82.00px;font-size:11.5px;color:#444444;letter-spacing:-0.500px;">Replace</span>
<span class="t" style="left:1003.0px;top:103.00px;font-size:11.5px;color:#444444;letter-spacing:-0.545px;">Select</span>
<span class="t" style="left:622.4px;top:72.01px;font-size:13.4px;color:#6e6e6e;letter-spacing:0.315px;width:55px;overflow:hidden;">AaBbCcD</span>
<span class="t" style="left:621.0px;top:96.00px;font-size:11.5px;color:#444444;letter-spacing:-0.158px;">¶ Instructi...</span>
<span class="t" style="left:690.2px;top:72.01px;font-size:13.4px;color:#6e6e6e;letter-spacing:0.315px;width:55.5px;overflow:hidden;">AaBbCcD</span>
<span class="t" style="left:694.5px;top:96.00px;font-size:11.5px;color:#444444;letter-spacing:-0.055px;">¶ Normal</span>
<span class="t" style="left:758.4px;top:72.01px;font-size:13.4px;color:#000;letter-spacing:-0.038px;font-weight:bold;width:54.5px;overflow:hidden;">AaBbCcD</span>
<span class="t" style="left:777.5px;top:96.00px;font-size:11.5px;color:#444444;letter-spacing:-0.688px;">¶</span>
<span class="t" style="left:784.8px;top:96.00px;font-size:11.5px;color:#444444;letter-spacing:-0.850px;">UI</span>
<span class="t" style="left:826.6px;top:72.01px;font-size:13.4px;color:#333;letter-spacing:0.315px;width:54.8px;overflow:hidden;">AaBbCcD</span>
<span class="t" style="left:825.0px;top:96.00px;font-size:11.5px;color:#444444;letter-spacing:-0.247px;">No Spacing</span>
<span class="t" style="left:896.5px;top:96.00px;font-size:11.5px;color:#444444;letter-spacing:-0.271px;">Heading 1</span>
<span class="t" style="left:7.4px;top:783.00px;font-size:11.5px;color:#444444;letter-spacing:-0.439px;z-index:6;">Page 2 of 4</span>
<span class="t" style="left:79.6px;top:783.00px;font-size:11.5px;color:#444444;letter-spacing:-0.340px;z-index:6;">377 words</span>
<span class="t" style="left:177.7px;top:783.00px;font-size:11.5px;color:#444444;letter-spacing:-0.366px;z-index:6;">English (United States)</span>
<span class="t" style="left:1083.9px;top:783.00px;font-size:11.5px;color:#444444;letter-spacing:-1.082px;z-index:6;">100 %</span>
<span class="t" style="left:834.0px;top:636.00px;font-size:11.5px;color:#444;letter-spacing:0.135px;font-weight:bold;">Author</span>
<span class="t" style="left:834.0px;top:651.00px;font-size:11.5px;color:#595959;letter-spacing:-0.010px;">Now you can reply to a comment to keep</span>
<span class="t" style="left:834.0px;top:666.00px;font-size:11.5px;color:#595959;letter-spacing:0.009px;">comments about the same topic together. Try it</span>
<span class="t" style="left:834.0px;top:681.00px;font-size:11.5px;color:#595959;letter-spacing:-0.015px;">by clicking this comment and then clicking its</span>
<span class="t" style="left:834.0px;top:696.00px;font-size:11.5px;color:#595959;letter-spacing:-0.097px;">Reply button.</span>
<span class="t" style="left:127.6px;top:183.00px;font-size:24.7px;color:#3f6cab;transform:scaleX(0.8970);transform-origin:0 0;font-family:'DejaVu Sans',sans-serif;font-weight:200;-webkit-text-stroke:0.55px #3f6cab;">1</span>
<span class="t" style="left:139.8px;top:178.00px;font-size:30px;color:#3f6cab;transform:scaleX(0.9951);transform-origin:0 0;font-family:'DejaVu Sans',sans-serif;font-weight:200;-webkit-text-stroke:0.55px #3f6cab;">.</span>
<span class="t" style="left:151.1px;top:177.01px;font-size:30.8px;color:#3f6cab;letter-spacing:-0.5px;transform:scaleX(0.9302);transform-origin:0 0;font-family:'DejaVu Sans',sans-serif;font-weight:200;-webkit-text-stroke:0.4px #3f6cab;">Use</span>
<span class="t" style="left:210.8px;top:177.01px;font-size:30.8px;color:#3f6cab;letter-spacing:-0.5px;transform:scaleX(0.8751);transform-origin:0 0;font-family:'DejaVu Sans',sans-serif;font-weight:200;-webkit-text-stroke:0.4px #3f6cab;">live</span>
<span class="t" style="left:264.0px;top:177.01px;font-size:30.8px;color:#3f6cab;letter-spacing:-0.5px;transform:scaleX(0.9103);transform-origin:0 0;font-family:'DejaVu Sans',sans-serif;font-weight:200;-webkit-text-stroke:0.4px #3f6cab;">layout</span>
<span class="t" style="left:356.6px;top:177.01px;font-size:30.8px;color:#3f6cab;letter-spacing:-0.5px;transform:scaleX(0.9394);transform-origin:0 0;font-family:'DejaVu Sans',sans-serif;font-weight:200;-webkit-text-stroke:0.4px #3f6cab;">and</span>
<span class="t" style="left:417.5px;top:177.01px;font-size:30.8px;color:#3f6cab;letter-spacing:-0.5px;transform:scaleX(0.9114);transform-origin:0 0;font-family:'DejaVu Sans',sans-serif;font-weight:200;-webkit-text-stroke:0.4px #3f6cab;">alignment</span>
<span class="t" style="left:561.5px;top:177.01px;font-size:30.8px;color:#3f6cab;letter-spacing:-0.5px;transform:scaleX(0.9279);transform-origin:0 0;font-family:'DejaVu Sans',sans-serif;font-weight:200;-webkit-text-stroke:0.4px #3f6cab;">guides</span>
<span class="t" style="left:157.8px;top:216.01px;font-size:14.8px;color:#666666;letter-spacing:-0.421px;">Click the image below and drag it around the page. With images that have text</span>
<span class="t" style="left:157.8px;top:238.01px;font-size:14.8px;color:#666666;letter-spacing:-0.403px;">wrapping, the text moves around the picture so you get a live preview of the new layout.</span>
<span class="t" style="left:157.8px;top:259.01px;font-size:14.8px;color:#666666;letter-spacing:-0.347px;">Try to line the image up with the top of this paragraph to see how the alignment guides</span>
<span class="t" style="left:157.8px;top:280.01px;font-size:14.8px;color:#666666;letter-spacing:-0.368px;">can help you position it on the page.  Click the Layout Options button next to the image</span>
<span class="t" style="left:157.8px;top:301.01px;font-size:14.8px;color:#666666;letter-spacing:-0.341px;">to change how it interacts with the text.</span>
<span class="t" style="left:402.8px;top:301.01px;font-size:14.8px;color:#1f5c99;letter-spacing:-0.492px;text-decoration:underline;">Learn more at office.com</span>
<span class="t" style="left:129.0px;top:553.00px;font-size:24.7px;color:#3f6cab;transform:scaleX(1.0815);transform-origin:0 0;font-family:'DejaVu Sans',sans-serif;font-weight:200;-webkit-text-stroke:0.55px #3f6cab;">2</span>
<span class="t" style="left:145.2px;top:548.00px;font-size:30px;color:#3f6cab;transform:scaleX(0.9951);transform-origin:0 0;font-family:'DejaVu Sans',sans-serif;font-weight:200;-webkit-text-stroke:0.55px #3f6cab;">.</span>
<span class="t" style="left:157.1px;top:547.01px;font-size:30.8px;color:#3f6cab;letter-spacing:-0.5px;transform:scaleX(0.9194);transform-origin:0 0;font-family:'DejaVu Sans',sans-serif;font-weight:200;-webkit-text-stroke:0.4px #3f6cab;">Collaborate</span>
<span class="t" style="left:325.5px;top:547.01px;font-size:30.8px;color:#3f6cab;letter-spacing:-0.5px;transform:scaleX(0.8231);transform-origin:0 0;font-family:'DejaVu Sans',sans-serif;font-weight:200;-webkit-text-stroke:0.4px #3f6cab;">in</span>
<span class="t" style="left:357.1px;top:547.01px;font-size:30.8px;color:#3f6cab;letter-spacing:-0.5px;transform:scaleX(0.8873);transform-origin:0 0;font-family:'DejaVu Sans',sans-serif;font-weight:200;-webkit-text-stroke:0.4px #3f6cab;">Simple</span>
<span class="t" style="left:459.1px;top:547.01px;font-size:30.8px;color:#3f6cab;letter-spacing:-0.5px;transform:scaleX(0.9143);transform-origin:0 0;font-family:'DejaVu Sans',sans-serif;font-weight:200;-webkit-text-stroke:0.4px #3f6cab;">Markup</span>
<span class="t" style="left:570.0px;top:547.01px;font-size:30.8px;color:#3f6cab;letter-spacing:-0.5px;transform:scaleX(0.9540);transform-origin:0 0;font-family:'DejaVu Sans',sans-serif;font-weight:200;-webkit-text-stroke:0.4px #3f6cab;">View</span>
<span class="t" style="left:157.8px;top:587.01px;font-size:14.8px;color:#666666;letter-spacing:-0.512px;">The new Simple Markup revision view presents a clean, uncomplicated view of your</span>
<span class="t" style="left:157.8px;top:609.00px;font-size:14.8px;color:#666666;letter-spacing:-0.545px;">document, but you still see markers where changes and comments have been made.</span>
<span class="t" style="left:157.8px;top:630.00px;font-size:14.8px;color:#666666;letter-spacing:-0.419px;">Click on the vertical bar on the left side of the text to see changes. Or click the comment</span>
<span class="t" style="left:157.8px;top:651.00px;font-size:14.8px;color:#666666;letter-spacing:-0.329px;">icon on the right to check out comments about this text.</span>
<span class="t" style="left:157.8px;top:685.00px;font-size:14.8px;color:#1f5c99;letter-spacing:-0.517px;text-decoration:underline;">Learn more at office.com</span>
<span class="t" style="left:129.0px;top:770.00px;font-size:24.7px;color:#3f6cab;transform:scaleX(1.0815);transform-origin:0 0;font-family:'DejaVu Sans',sans-serif;font-weight:200;-webkit-text-stroke:0.55px #3f6cab;">3</span>
<span class="t" style="left:145.2px;top:761.01px;font-size:30px;color:#3f6cab;transform:scaleX(0.9951);transform-origin:0 0;font-family:'DejaVu Sans',sans-serif;font-weight:200;-webkit-text-stroke:0.55px #3f6cab;">.</span>
<span class="t" style="left:157.1px;top:760.00px;font-size:30.8px;color:#3f6cab;letter-spacing:-0.5px;transform:scaleX(0.8830);transform-origin:0 0;font-family:'DejaVu Sans',sans-serif;font-weight:200;-webkit-text-stroke:0.4px #3f6cab;">Insert</span>
<span class="t" style="left:242.3px;top:760.00px;font-size:30.8px;color:#3f6cab;letter-spacing:-0.5px;transform:scaleX(0.9004);transform-origin:0 0;font-family:'DejaVu Sans',sans-serif;font-weight:200;-webkit-text-stroke:0.4px #3f6cab;">Online</span>
<span class="t" style="left:339.8px;top:760.00px;font-size:30.8px;color:#3f6cab;letter-spacing:-0.5px;transform:scaleX(0.9150);transform-origin:0 0;font-family:'DejaVu Sans',sans-serif;font-weight:200;-webkit-text-stroke:0.4px #3f6cab;">Pictures</span>
<span class="t" style="left:459.1px;top:760.00px;font-size:30.8px;color:#3f6cab;letter-spacing:-0.5px;transform:scaleX(0.8674);transform-origin:0 0;font-family:'DejaVu Sans',sans-serif;font-weight:200;-webkit-text-stroke:0.4px #3f6cab;">and</span>
<span class="t" style="left:514.5px;top:760.00px;font-size:30.8px;color:#3f6cab;letter-spacing:-0.5px;transform:scaleX(0.9905);transform-origin:0 0;font-family:'DejaVu Sans',sans-serif;font-weight:200;-webkit-text-stroke:0.4px #3f6cab;">Video</span>

</body>
</html>
